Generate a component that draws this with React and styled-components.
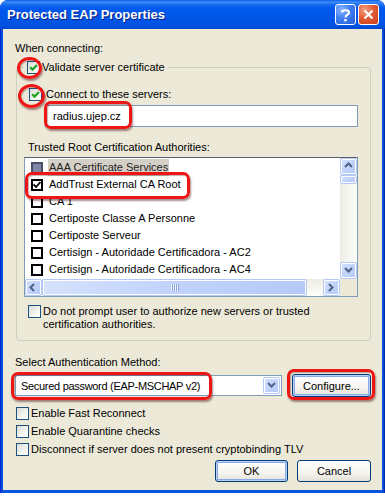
import React from 'react';
import styled, { createGlobalStyle, css } from 'styled-components';

const GlobalStyle = createGlobalStyle`
  html, body {
    margin: 0;
    padding: 0;
    background: #ffffff;
  }
  body {
    font-family: "Liberation Sans", Arial, sans-serif;
    font-size: 11px;
    color: #000;
  }
`;

// ---------- window frame ----------
const Window = styled.div`
  width: 385px;
  height: 493px;
  box-sizing: border-box;
  display: flex;
  flex-direction: column;
  border-radius: 8px 8px 0 0;
  background: linear-gradient(to right, #0019cf 0px, #0855dd 2px, #0855dd 383px, #001ea0 385px);
  padding: 0 3px 3px 3px;
  overflow: hidden;
`;

const TitleBar = styled.div`
  height: 29px;
  margin: 0 -3px;
  display: flex;
  align-items: center;
  padding: 0 6px 0 7px;
  background: linear-gradient(
    to bottom,
    #0a5fe8 0px,
    #3d8ef7 2px,
    #1468f0 5px,
    #0058ee 9px,
    #0055e6 20px,
    #0052e0 26px,
    #0046cc 29px
  );
  border-radius: 7px 7px 0 0;
`;

const Title = styled.div`
  flex: 1;
  color: #fff;
  font-family: "Liberation Sans", Arial, sans-serif;
  font-weight: bold;
  font-size: 13px;
  text-shadow: 1px 1px 0 #0a1f80;
`;

const CaptionButton = styled.div`
  width: 21px;
  height: 21px;
  box-sizing: border-box;
  border: 1px solid #fff;
  border-radius: 3px;
  display: flex;
  align-items: center;
  justify-content: center;
  margin-left: 2px;
  ${(p) =>
    p.$close
      ? css`
          background: radial-gradient(circle at 30% 25%, #f4a080 0%, #e35b33 45%, #c8401c 100%);
        `
      : css`
          background: radial-gradient(circle at 30% 25%, #8cb4ff 0%, #3f7ff0 45%, #2459d8 100%);
        `}
`;

const Client = styled.div`
  flex: 1;
  background: #ece9d8;
  display: flex;
  flex-direction: column;
  padding: 13px 11px 7px 12px;
  box-sizing: border-box;
`;

const Label = styled.div`
  line-height: 13px;
  margin-left: ${(p) => p.$indent || 0}px;
  margin-top: ${(p) => p.$top || 0}px;
`;

// ---------- group box ----------
const Group = styled.fieldset`
  margin: 6px 0 0 1px;
  padding: 14px 12px 9px 7px;
  border: 1px solid #d0d0bf;
  border-radius: 4px;
  min-width: 0;
  display: flex;
  flex-direction: column;
`;

const Legend = styled.legend`
  padding: 0 3px 0 3px;
  display: flex;
  align-items: center;
  gap: 2px;
  line-height: 13px;
`;

const Row = styled.div`
  display: flex;
  align-items: ${(p) => p.$align || 'center'};
  gap: ${(p) => p.$gap ?? 3}px;
  margin-left: ${(p) => p.$indent || 0}px;
  margin-top: ${(p) => p.$top || 0}px;
  min-height: ${(p) => p.$h || 13}px;
  line-height: 13px;
`;

const Anchor = styled.span`
  position: relative;
  display: inline-flex;
`;

const Ring = styled.span`
  position: absolute;
  box-sizing: border-box;
  border: 3px solid #ee1515;
  border-radius: ${(p) => (p.$oval ? '50%' : '7px')};
  box-shadow: 1px 2px 2px rgba(60, 0, 0, 0.45), inset 1px 1px 1px rgba(60, 0, 0, 0.3);
  pointer-events: none;
  z-index: 5;
`;

// ---------- XP checkbox ----------
const CheckBox = styled.span`
  width: 13px;
  height: 13px;
  flex: none;
  box-sizing: border-box;
  border: 1px solid #1c5180;
  background: linear-gradient(135deg, #dcdcd7 0%, #f4f4f0 60%, #ffffff 100%);
  display: inline-flex;
  align-items: center;
  justify-content: center;
`;

const XpCheck = ({ checked }) => (
  <CheckBox>
    {checked && (
      <svg width="9" height="9" viewBox="0 0 9 9">
        <path d="M1.2 4.2 L3.5 6.6 L8 2" fill="none" stroke="#21a121" strokeWidth="2.2" />
      </svg>
    )}
  </CheckBox>
);

// ---------- inputs ----------
const TextInput = styled.div`
  height: 22px;
  box-sizing: border-box;
  border: 1px solid #7f9db9;
  background: #fff;
  display: flex;
  align-items: center;
  padding-left: 7px;
  margin-left: 21px;
  margin-top: 4px;
  position: relative;
`;

// ---------- list view ----------
const ListBox = styled.div`
  margin-top: 3px;
  height: 140px;
  box-sizing: border-box;
  border: 1px solid #7f9db9;
  border-top-color: #5a6070;
  background: #fff;
  display: grid;
  grid-template-columns: 1fr 17px;
  grid-template-rows: 1fr 17px;
`;

const Items = styled.div`
  padding-top: 1px;
`;

const Item = styled.div`
  height: 17px;
  display: flex;
  align-items: center;
  padding-left: 6px;
  gap: 5px;
  position: relative;
  white-space: nowrap;
`;

const ItemText = styled.span`
  padding: 0 1px;
  line-height: 17px;
  ${(p) =>
    p.$selected &&
    css`
      background: #d4d0c8;
      color: #222;
    `}
`;

const ListCheck = styled.span`
  width: 12px;
  height: 12px;
  box-sizing: border-box;
  border: 2px solid #000;
  background: ${(p) => (p.$selected ? '#7f87a4' : '#fff')};
  border-color: ${(p) => (p.$selected ? '#4a5068' : '#000')};
  display: inline-flex;
  align-items: center;
  justify-content: center;
`;

const VTrack = styled.div`
  background: linear-gradient(to right, #eeede5, #fdfdfa);
  display: flex;
  flex-direction: column;
`;

const HTrack = styled.div`
  background: linear-gradient(to bottom, #eeede5, #fdfdfa);
  display: flex;
  align-items: stretch;
`;

const Corner = styled.div`
  background: #ece9d8;
`;

const ScrollPart = styled.div`
  box-sizing: border-box;
  border: 1px solid #b4c8f6;
  border-radius: 2px;
  box-shadow: inset 0 0 0 1px #fff;
  background: linear-gradient(135deg, #d6e2fd 0%, #c1d3fb 50%, #b4c9f7 100%);
  display: flex;
  align-items: center;
  justify-content: center;
  flex: ${(p) => (p.$grow ? 1 : 'none')};
  width: ${(p) => (p.$grow ? 'auto' : `${p.$w || 17}px`)};
  height: ${(p) => p.$h || 17}px;
  margin-left: ${(p) => p.$gapLeft || 0}px;
`;

const Spacer = styled.div`
  flex: 1;
`;

const Arrow = ({ dir }) => {
  const paths = {
    up: 'M1 5 L4.5 1.5 L8 5',
    down: 'M1 2 L4.5 5.5 L8 2',
    left: 'M5 1 L1.5 4.5 L5 8',
    right: 'M2 1 L5.5 4.5 L2 8',
  };
  return (
    <svg width="9" height="9" viewBox="0 0 9 9">
      <path d={paths[dir]} fill="none" stroke="#4d6185" strokeWidth="2" />
    </svg>
  );
};

const Grip = () => (
  <svg width="8" height="7" viewBox="0 0 8 7">
    {[0, 2, 4, 6].map((x) => (
      <rect key={x} x={x} y="0" width="1" height="7" fill="#eef3fe" />
    ))}
    {[1, 3, 5, 7].map((x) => (
      <rect key={x} x={x} y="0" width="1" height="7" fill="#8ca6e8" />
    ))}
  </svg>
);

// ---------- combo + buttons ----------
const Combo = styled.div`
  flex: 1;
  height: 21px;
  box-sizing: border-box;
  border: 1px solid #7f9db9;
  background: #fff;
  display: flex;
  align-items: center;
  padding: 0 1px 0 5px;
`;

const ComboText = styled.span`
  position: relative;
  letter-spacing: -0.3px;
`;

const Button = styled.div`
  width: ${(p) => p.$w}px;
  height: ${(p) => p.$h || 22}px;
  box-sizing: border-box;
  border: 1px solid #003c74;
  border-radius: 3px;
  background: linear-gradient(to bottom, #ffffff 0%, #f5f4ef 60%, #e3e0d6 100%);
  display: flex;
  align-items: center;
  justify-content: center;
  position: relative;
  ${(p) =>
    p.$default &&
    css`
      box-shadow: inset 0 0 0 1px #b9d1f7, inset 0 0 0 2px #8aa9ec;
    `}
`;

const SelectRow = styled.div`
  display: flex;
  align-items: center;
  gap: 10px;
  margin-top: 5px;
`;

const Options = styled.div`
  display: flex;
  flex-direction: column;
  margin-top: 7px;
  margin-left: 1px;
`;

const Footer = styled.div`
  display: flex;
  justify-content: flex-end;
  gap: 9px;
  margin-top: 2px;
`;

const certs = [
  'AAA Certificate Services',
  'AddTrust External CA Root',
  'CA 1',
  'Certiposte Classe A Personne',
  'Certiposte Serveur',
  'Certisign - Autoridade Certificadora - AC2',
  'Certisign - Autoridade Certificadora - AC4',
];

export default function App() {
  return (
    <>
      <GlobalStyle />
      <Window>
        <TitleBar>
          <Title>Protected EAP Properties</Title>
          <CaptionButton>
            <svg width="11" height="14" viewBox="0 0 11 14">
              <path
                d="M2 4.5 C2 1.5 9 1.5 9 4.5 C9 7 5.5 6.5 5.5 9.5"
                fill="none"
                stroke="#fff"
                strokeWidth="2.2"
              />
              <rect x="4.3" y="11" width="2.4" height="2.4" fill="#fff" />
            </svg>
          </CaptionButton>
          <CaptionButton $close>
            <svg width="11" height="11" viewBox="0 0 11 11">
              <path d="M1.5 1.5 L9.5 9.5 M9.5 1.5 L1.5 9.5" stroke="#fff" strokeWidth="2.2" />
            </svg>
          </CaptionButton>
        </TitleBar>

        <Client>
          <Label>When connecting:</Label>

          <Group>
            <Legend>
              <Anchor>
                <XpCheck checked />
                <Ring $oval style={{ left: -10, top: -4, width: 25, height: 22 }} />
              </Anchor>
              <span>Validate server certificate</span>
            </Legend>

            <Row $indent={5} $gap={4}>
              <Anchor>
                <XpCheck checked />
                <Ring $oval style={{ left: -11, top: -4, width: 27, height: 24 }} />
              </Anchor>
              <span>Connect to these servers:</span>
            </Row>

            <TextInput>
              radius.ujep.cz
              <Ring style={{ left: -2, top: -5, width: 88, height: 28 }} />
            </TextInput>

            <Label $indent={4} $top={14}>
              Trusted Root Certification Authorities:
            </Label>

            <ListBox>
              <Items>
                {certs.map((name, i) => (
                  <Item key={name}>
                    <ListCheck $selected={i === 0}>
                      {i === 1 && (
                        <svg width="8" height="8" viewBox="0 0 8 8">
                          <path d="M0.5 3.5 L3 6 L7.5 1" fill="none" stroke="#000" strokeWidth="1.8" />
                        </svg>
                      )}
                    </ListCheck>
                    <ItemText $selected={i === 0}>{name}</ItemText>
                    {i === 1 && <Ring style={{ left: 0, top: -4, width: 165, height: 27 }} />}
                  </Item>
                ))}
              </Items>
              <VTrack>
                <ScrollPart>
                  <Arrow dir="up" />
                </ScrollPart>
                <ScrollPart $h={9} />
                <Spacer />
                <ScrollPart>
                  <Arrow dir="down" />
                </ScrollPart>
              </VTrack>
              <HTrack>
                <ScrollPart>
                  <Arrow dir="left" />
                </ScrollPart>
                <ScrollPart $grow>
                  <Grip />
                </ScrollPart>
                <ScrollPart $gapLeft={16}>
                  <Arrow dir="right" />
                </ScrollPart>
              </HTrack>
              <Corner />
            </ListBox>

            <Row $indent={4} $top={8} $align="flex-start" $gap={2}>
              <XpCheck />
              <span>
                Do not prompt user to authorize new servers or trusted
                <br />
                certification authorities.
              </span>
            </Row>
          </Group>

          <Label $top={15}>Select Authentication Method:</Label>

          <SelectRow>
            <Combo>
              <ComboText>
                Secured password (EAP-MSCHAP v2)
                <Ring style={{ left: -10, top: -8, right: -12, bottom: -8 }} />
              </ComboText>
              <Spacer />
              <ScrollPart>
                <Arrow dir="down" />
              </ScrollPart>
            </Combo>
            <Button $w={79} $h={23} $default>
              Configure...
              <Ring style={{ left: -6, top: -6, right: -5, bottom: -4 }} />
            </Button>
          </SelectRow>

          <Options>
            <Row $h={18} $gap={2}>
              <XpCheck />
              <span>Enable Fast Reconnect</span>
            </Row>
            <Row $h={18} $gap={2}>
              <XpCheck />
              <span>Enable Quarantine checks</span>
            </Row>
            <Row $h={18} $gap={2}>
              <XpCheck />
              <span>Disconnect if server does not present cryptobinding TLV</span>
            </Row>
          </Options>

          <Footer>
            <Button $w={73} $default>OK</Button>
            <Button $w={74}>Cancel</Button>
          </Footer>
        </Client>
      </Window>
    </>
  );
}
